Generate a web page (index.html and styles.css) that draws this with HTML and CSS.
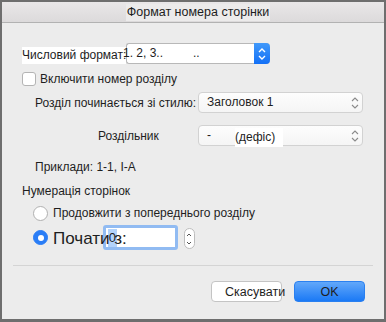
FILE: index.html
```html
<!DOCTYPE html>
<html lang="uk">
<head>
  <meta charset="UTF-8">
  <meta name="viewport" content="width=device-width, initial-scale=1.0">
  <title>Формат номера сторінки</title>
  <link rel="stylesheet" href="styles.css">
</head>
<body>
  <div class="window">
    <div class="titlebar"><span class="title">Формат номера сторінки</span></div>

    <div class="content">
      <div class="row row-format">
        <span class="format-label">Числовий формат:</span>
        <div class="format-select">
          <span class="format-value">1. 2, 3..         ..</span>
          <span class="format-stepper">
            <svg width="10" height="14" viewBox="0 0 10 14"><path d="M2 5 L5 2 L8 5 M2 9 L5 12 L8 9" fill="none" stroke="#fff" stroke-width="1.4"/></svg>
          </span>
        </div>
      </div>

      <label class="row row-check">
        <span class="checkbox"></span>
        <span>Включити номер розділу</span>
      </label>

      <div class="row row-style">
        <span class="field-label style-label">Розділ починається зі стилю:</span>
        <div class="popup">
          <span class="popup-value">Заголовок 1</span>
          <svg class="updown" width="10" height="14" viewBox="0 0 10 14"><path d="M2 5 L5 2 L8 5 M2 9 L5 12 L8 9" fill="none" stroke="#8a8a8a" stroke-width="1.1"/></svg>
        </div>
      </div>

      <div class="row row-sep">
        <span class="field-label sep-label">Роздільник</span>
        <div class="popup">
          <span class="popup-value">-</span>
          <span class="popup-note">(дефіс)</span>
          <svg class="updown" width="10" height="14" viewBox="0 0 10 14"><path d="M2 5 L5 2 L8 5 M2 9 L5 12 L8 9" fill="none" stroke="#8a8a8a" stroke-width="1.1"/></svg>
        </div>
      </div>

      <p class="examples">Приклади: 1-1, I-A</p>

      <p class="section-title">Нумерація сторінок</p>

      <label class="row row-radio">
        <span class="radio"></span>
        <span>Продовжити з попереднього розділу</span>
      </label>

      <div class="row row-start">
        <span class="radio checked"></span>
        <span class="start-label">Почати з:</span>
        <span class="start-input"><span class="sel">0</span></span>
        <span class="stepper">
          <svg width="8" height="18" viewBox="0 0 8 18"><path d="M2 6 L4 4 L6 6 M2 12 L4 14 L6 12" fill="none" stroke="#555" stroke-width="1"/></svg>
        </span>
      </div>

      <div class="divider"></div>

      <div class="buttons">
        <button class="btn btn-cancel">Скасувати</button>
        <button class="btn btn-ok">OK</button>
      </div>
    </div>
  </div>
</body>
</html>
```

FILE: styles.css
```css
* {
  margin: 0;
  padding: 0;
  box-sizing: border-box;
}

body {
  font-family: 'Liberation Sans', Arial, sans-serif;
  font-size: 12px;
  color: #1e1e1e;
  background: #ececec;
  white-space: nowrap;
}

.window {
  width: 386px;
  height: 322px;
  background: #ececec;
  border: 2px solid #6e6e6e;
  border-bottom-width: 3px;
  overflow: hidden;
}

.titlebar {
  height: 21px;
  background: linear-gradient(#e9e7e8, #dcdadb);
  border-bottom: 1px solid #b2b2b2;
  display: flex;
  align-items: center;
  justify-content: center;
  padding-left: 10px;
}

.title {
  font-size: 12.5px;
  background: #ecebeb;
  line-height: 17px;
  padding: 0 1px;
}

.content {
  padding: 0 21px 0 20px;
}

.row {
  display: flex;
  align-items: center;
}

/* number format */
.row-format {
  margin-top: 20px;
  height: 21px;
  align-items: stretch;
}

.format-label {
  width: 104px;
  flex: none;
  background: #fff;
  margin-top: 4px;
  line-height: 17px;
}

.format-select {
  width: 144px;
  display: flex;
  background: #fff;
  border: 1px solid #b8b8b8;
  border-right: none;
  border-radius: 3px 4px 4px 3px;
}

.format-value {
  flex: 1;
  white-space: pre;
  margin-left: -4px;
  line-height: 19px;
}

.format-stepper {
  width: 16px;
  margin: -1px 0;
  background: linear-gradient(#4199fa, #1370f6);
  border-radius: 0 4px 4px 0;
  display: flex;
  align-items: center;
  justify-content: center;
}

/* checkbox */
.row-check {
  margin-top: 8px;
  height: 14px;
  gap: 4px;
}

.checkbox {
  width: 14px;
  height: 14px;
  background: #fff;
  border: 1px solid #b4b4b4;
  border-radius: 3px;
}

/* style / separator popups */
.row-style {
  margin-top: 6px;
  height: 21px;
}

.row-sep {
  margin-top: 12px;
  height: 21px;
}

.field-label {
  width: 176px;
  flex: none;
}

.style-label {
  padding-left: 13px;
}

.sep-label {
  padding-left: 76px;
}

.popup {
  width: 167px;
  height: 100%;
  display: flex;
  align-items: center;
  background: linear-gradient(#fdfdfd, #f5f5f5);
  border: 1px solid #d2d2d2;
  border-radius: 4px;
  padding-left: 8px;
}

.popup-value {
  line-height: 17px;
}

.popup-note {
  margin-left: 24px;
  background: #fff;
  line-height: 19px;
  margin-top: 3px;
  padding-right: 8px;
}

.updown {
  margin-left: auto;
  margin-right: 2px;
}

.examples {
  margin-top: 13px;
  padding-left: 13px;
  line-height: 16px;
}

.section-title {
  margin-top: 8px;
  line-height: 16px;
}

/* radios */
.row-radio {
  margin-top: 6px;
  height: 16px;
  padding-left: 11px;
  gap: 5px;
}

.radio {
  width: 15px;
  height: 15px;
  border-radius: 50%;
  background: #fff;
  border: 1px solid #b0b0b0;
  flex: none;
}

.radio.checked {
  background: #2a7df6;
  border-color: #2a7df6;
  display: flex;
  align-items: center;
  justify-content: center;
}

.radio.checked::after {
  content: '';
  width: 6px;
  height: 6px;
  border-radius: 50%;
  background: #fff;
}

.row-start {
  margin-top: 4px;
  height: 25px;
  padding-left: 11px;
}

.start-label {
  flex: none;
  font-size: 17px;
  margin-left: 5px;
  margin-top: 3px;
  position: relative;
  z-index: 1;
}

.start-input {
  flex: none;
  width: 75px;
  height: 25px;
  margin-left: -24px;
  background: #fff;
  border: 3px solid #91bbf2;
  border-radius: 3px;
  padding: 1px 0 0 2px;
}

.sel {
  display: inline-block;
  background: #b3d3fb;
  font-size: 13px;
  line-height: 18px;
  padding: 0 1px;
}

.stepper {
  flex: none;
  width: 11px;
  height: 21px;
  margin-left: 6px;
  margin-top: 2px;
  background: #fff;
  border: 1px solid #bdbdbd;
  border-radius: 6px;
  display: flex;
  align-items: center;
  justify-content: center;
}

.divider {
  height: 1px;
  background: #d4d4d4;
  margin: 15px -10px 0 -9px;
}

.buttons {
  display: flex;
  justify-content: flex-end;
  gap: 12px;
  margin: 15px -2px 0 0;
}

.btn {
  width: 71px;
  height: 21px;
  font-family: inherit;
  font-size: 12.5px;
  color: #1e1e1e;
  border-radius: 4px;
}

.btn-cancel {
  background: #fff;
  border: 1px solid #c4c4c4;
  text-align: left;
  padding-left: 13px;
  white-space: nowrap;
}

.btn-ok {
  background: linear-gradient(#62a8fa, #1b79f5);
  border: 1px solid #2a80f0;
}
```
